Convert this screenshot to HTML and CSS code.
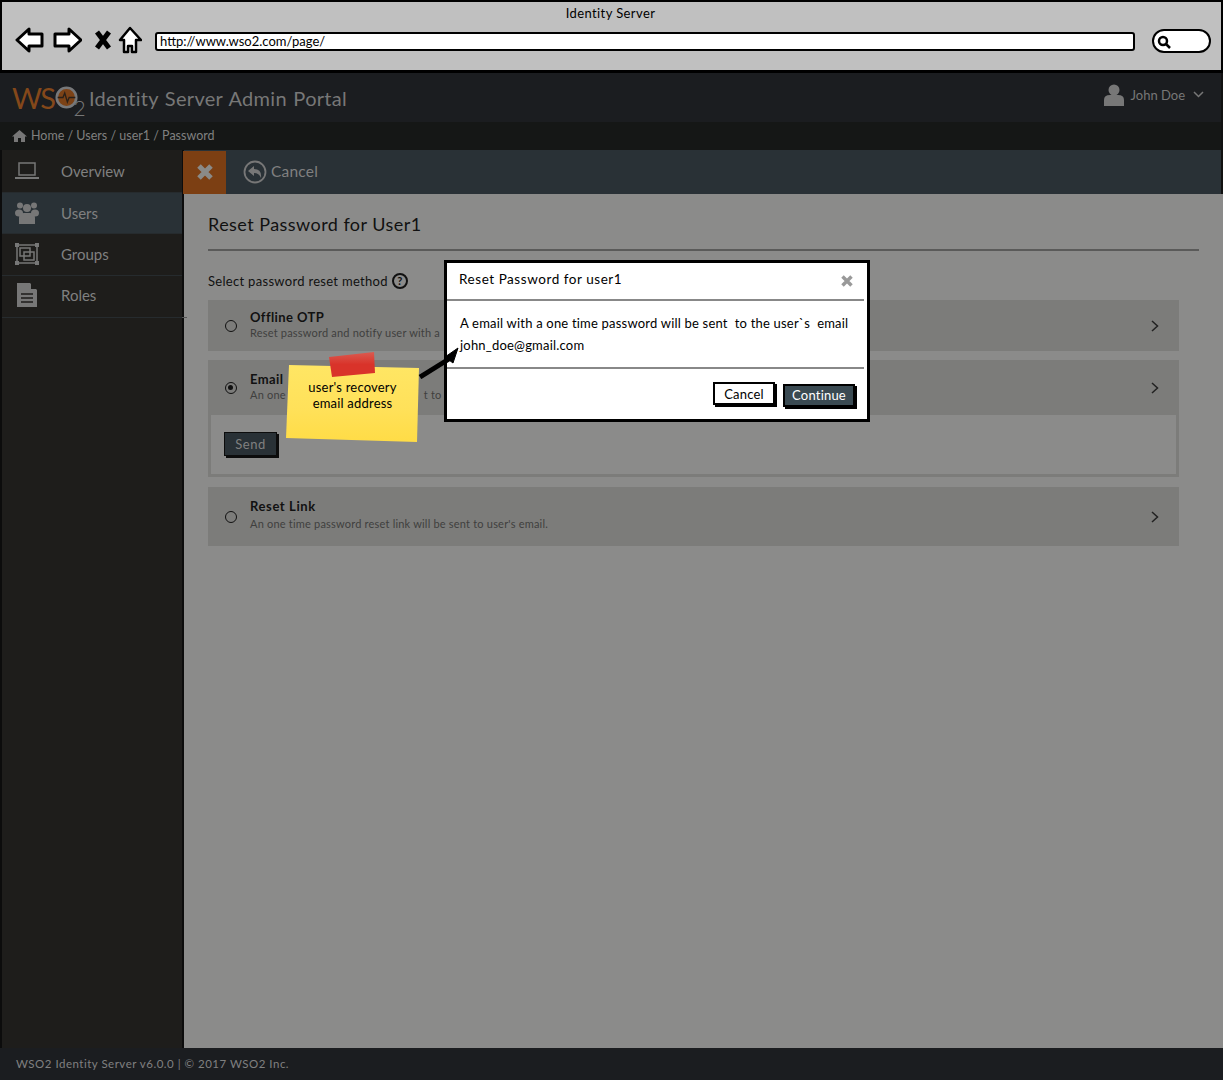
FILE: index.html
```html
<!DOCTYPE html>
<html lang="en">

<head>
  <meta charset="UTF-8">
  <meta name="viewport" content="width=device-width, initial-scale=1.0">
  <title>Identity Server</title>
  <link rel="stylesheet" href="styles.css">
</head>

<body>
  <div id="page">
    <!-- browser chrome -->
    <div id="browser">
      <div class="browser-title">Identity Server</div>
      <div class="browser-nav">
        <svg class="nav-icon" width="30" height="26" viewBox="0 0 30 26"><path d="M2 13 L14 2 L14 7 L27 7 L27 19 L14 19 L14 24 Z" fill="#fff" stroke="#000" stroke-width="3" stroke-linejoin="round"/></svg>
        <svg class="nav-icon" width="30" height="26" viewBox="0 0 30 26"><path d="M29 13 L17 2 L17 7 L3 7 L3 19 L17 19 L17 24 Z" fill="#fff" stroke="#000" stroke-width="3" stroke-linejoin="round"/></svg>
        <svg class="nav-icon nav-x" width="16" height="20" viewBox="0 0 16 20"><path d="M2 2 L14 18 M14 2 L2 18" stroke="#000" stroke-width="5"/></svg>
        <svg class="nav-icon" width="24" height="28" viewBox="0 0 24 28"><path d="M12 2 L23 14 L18 14 L18 26 L14 26 L14 20 L10 20 L10 26 L6 26 L6 14 L2 14 Z" fill="#fff" stroke="#000" stroke-width="2.5" stroke-linejoin="round"/></svg>
        <div class="url-box">http://www.wso2.com/page/</div>
        <div class="search-box">
          <svg width="14" height="14" viewBox="0 0 14 14"><circle cx="6" cy="6" r="4" fill="none" stroke="#000" stroke-width="2.5"/><path d="M9 9 L13 13" stroke="#000" stroke-width="2.5"/></svg>
        </div>
      </div>
    </div>

    <header id="header">
      <div class="logo">
        <span class="logo-ws">WS</span>
        <svg class="logo-o" width="23" height="23" viewBox="0 0 26 26"><circle cx="13" cy="13" r="11" fill="#7c4216" stroke="#77787a" stroke-width="3"/><path d="M3 13 L9 13 L11 8 L14 18 L16 13 L23 13" fill="none" stroke="#2a2018" stroke-width="1.500"/></svg>
        <span class="logo-two">2</span>
      </div>
      <div class="app-name">Identity Server Admin Portal</div>
      <div class="user">
        <svg width="20" height="22" viewBox="0 0 20 22"><circle cx="10" cy="6" r="5.500" fill="#777"/><path d="M0 22 L0 16 Q0 11 6 11 L14 11 Q20 11 20 16 L20 22 Z" fill="#777"/></svg>
        <span class="user-name">John Doe</span>
        <svg width="11" height="7" viewBox="0 0 11 7"><path d="M1 1 L5.500 5.500 L10 1" fill="none" stroke="#777" stroke-width="1.500"/></svg>
      </div>
    </header>

    <div id="crumbs">
      <svg width="15" height="12" viewBox="0 0 15 12"><path d="M7.500 0 L15 6.500 L13 6.500 L13 12 L9 12 L9 8 L6 8 L6 12 L2 12 L2 6.500 L0 6.500 Z" fill="#777"/></svg>
      <span>Home / Users / user1 / Password</span>
    </div>

    <div id="main">
      <ul id="side">
        <li class="side-item">
          <svg width="24" height="18" viewBox="0 0 24 18"><rect x="4" y="1" width="16" height="12" fill="none" stroke="#777" stroke-width="1.500"/><rect x="0" y="15" width="24" height="2" fill="#777"/></svg>
          <span>Overview</span>
        </li>
        <li class="side-item side-active">
          <svg width="24" height="22" viewBox="0 0 24 22"><circle cx="5" cy="3.500" r="3" fill="#777"/><circle cx="19" cy="3.500" r="3" fill="#777"/><circle cx="12" cy="6" r="4" fill="#777"/><ellipse cx="4" cy="11" rx="4" ry="3.500" fill="#777"/><ellipse cx="20" cy="11" rx="4" ry="3.500" fill="#777"/><path d="M4 22 L4 16 Q4 11 9 11 L15 11 Q20 11 20 16 L20 22 Z" fill="#777"/></svg>
          <span>Users</span>
        </li>
        <li class="side-item">
          <svg width="24" height="22" viewBox="0 0 24 22"><path d="M2 2 H22 V20 H2 Z" fill="none" stroke="#777" stroke-width="1.500"/><rect x="0" y="0" width="4" height="4" fill="#777"/><rect x="20" y="0" width="4" height="4" fill="#777"/><rect x="0" y="18" width="4" height="4" fill="#777"/><rect x="20" y="18" width="4" height="4" fill="#777"/><rect x="5" y="5" width="10" height="8" fill="none" stroke="#777" stroke-width="1.500"/><rect x="9" y="9" width="10" height="8" fill="none" stroke="#777" stroke-width="1.500"/></svg>
          <span>Groups</span>
        </li>
        <li class="side-item side-roles">
          <svg width="22" height="24" viewBox="0 0 22 24"><path d="M1 0 H14 L21 7 V24 H1 Z" fill="#777"/><path d="M15 0 L21 6 H15 Z" fill="#1e1d1b"/><path d="M5 11 H17 M5 15 H17 M5 19 H17" stroke="#1e1d1b" stroke-width="1.500"/></svg>
          <span>Roles</span>
        </li>
      </ul>

      <div id="right">
        <div id="toolbar">
          <div class="tool-close">
            <svg width="18" height="18" viewBox="0 0 18 18"><path d="M3 3 L15 15 M15 3 L3 15" stroke="#8a8a88" stroke-width="5"/></svg>
          </div>
          <div class="tool-cancel">
            <svg width="24" height="24" viewBox="0 0 24 24"><circle cx="12" cy="12" r="10.500" fill="none" stroke="#777" stroke-width="1.800"/><path d="M5 11 L11 6 L11 9 Q19 9 18 18 Q16 13 11 13 L11 16 Z" fill="#777"/></svg>
            <span>Cancel</span>
          </div>
        </div>

        <div id="content">
          <h1 class="page-title">Reset Password for User1</h1>
          <div class="method-label">
            <span>Select password reset method</span>
            <span class="help">?</span>
          </div>

          <div class="method">
            <span class="radio"></span>
            <div class="method-text">
              <div class="method-name">Offline OTP</div>
              <div class="method-desc">Reset password and notify user with a</div>
            </div>
            <svg class="chevron" width="8" height="12" viewBox="0 0 8 12"><path d="M1 1 L6.500 6 L1 11" fill="none" stroke="#222" stroke-width="1.500"/></svg>
          </div>

          <div class="method method-open">
            <span class="radio radio-on"></span>
            <div class="method-text">
              <div class="method-name">Email</div>
              <div class="method-desc">An one<span class="desc-rest">t to u</span></div>
            </div>
            <svg class="chevron" width="8" height="12" viewBox="0 0 8 12"><path d="M1 1 L6.500 6 L1 11" fill="none" stroke="#222" stroke-width="1.500"/></svg>
          </div>
          <div class="method-panel">
            <button class="send-btn">Send</button>
          </div>

          <div class="method method-last">
            <span class="radio"></span>
            <div class="method-text">
              <div class="method-name">Reset Link</div>
              <div class="method-desc">An one time password reset link will be sent to user's email.</div>
            </div>
            <svg class="chevron" width="8" height="12" viewBox="0 0 8 12"><path d="M1 1 L6.500 6 L1 11" fill="none" stroke="#222" stroke-width="1.500"/></svg>
          </div>
        </div>
      </div>
    </div>

    <footer id="footer">WSO2 Identity Server v6.0.0 | © 2017 WSO2 Inc.</footer>

    <!-- dialog and its note lie over the page -->
    <div id="dialog">
      <div class="dialog-head">
        <span>Reset Password for user1</span>
        <svg width="12" height="12" viewBox="0 0 12 12"><path d="M1.500 1.500 L10.500 10.500 M10.500 1.500 L1.500 10.500" stroke="#999" stroke-width="3.500"/></svg>
      </div>
      <div class="dialog-body">
        <p>A email with a one time password will be sent&nbsp; to the user`s&nbsp; email</p>
        <p>john_doe@gmail.com</p>
      </div>
      <div class="dialog-foot">
        <button class="btn-cancel">Cancel</button>
        <button class="btn-continue">Continue</button>
      </div>
    </div>

    <div id="note">user's recovery<br>email address</div>
    <div id="tape"></div>
    <svg id="arrow" width="44" height="34" viewBox="0 0 44 34"><path d="M2 32 L31 14" stroke="#000" stroke-width="5"/><path d="M40 3 L35 18 L27 12 Z" fill="#000" stroke="#000" stroke-width="1"/></svg>
  </div>
</body>

</html>
```

FILE: styles.css
```css
* {
  margin: 0;
  padding: 0;
  box-sizing: border-box;
}

li {
  list-style: none;
}

body {
  font-family: "Lato", "Noto Sans", sans-serif;
  background-color: #000;
}

#page {
  position: relative;
  width: 1223px;
  height: 1080px;
  display: flex;
  flex-direction: column;
  overflow: hidden;
}

/* browser chrome */
#browser {
  height: 73px;
  background-color: #c0c0c0;
  border: 2px solid #000;
  border-bottom-width: 3px;
  flex-shrink: 0;
}

.browser-title {
  text-align: center;
  font-size: 13px;
  line-height: 15px;
  margin: 4px 2px 0 0;
  letter-spacing: 0.4px;
}

.browser-nav {
  display: flex;
  align-items: center;
  padding-left: 13px;
  margin-top: 1px;
  height: 36px;
}

.nav-icon {
  margin-right: 7px;
  flex-shrink: 0;
}

.nav-x {
  margin-left: 6px;
}

.url-box {
  width: 980px;
  height: 19px;
  margin: 2px 0 0 6px;
  background-color: #fff;
  border: 2.500px solid #000;
  border-radius: 3px;
  font-size: 13px;
  line-height: 14px;
  padding-left: 3px;
}

.search-box {
  width: 59px;
  height: 24px;
  margin: 1px 0 0 17px;
  background-color: #fff;
  border: 2.500px solid #000;
  border-radius: 12px;
  padding: 2px 0 0 3px;
}

/* header */
#header {
  height: 49px;
  background-color: #1b1d20;
  border-right: 2px solid #111;
  display: flex;
  align-items: center;
  padding: 0 17px 0 12px;
  flex-shrink: 0;
}

.logo {
  display: flex;
  align-items: center;
  width: 77px;
  height: 34px;
  color: #84481a;
}

.logo-ws {
  font-size: 29px;
  letter-spacing: -1.500px;
}

.logo-o {
  margin-left: 0;
  flex-shrink: 0;
}

.logo-two {
  color: #777;
  font-size: 21px;
  font-weight: 300;
  align-self: flex-end;
  line-height: 20px;
  margin-left: -4px;
  margin-bottom: -3px;
}

.app-name {
  color: #777;
  font-size: 20px;
  letter-spacing: 0.300px;
  word-spacing: 1px;
  flex: 1;
}

.user {
  display: flex;
  align-items: center;
  color: #777;
  font-size: 13px;
  margin-top: -6px;
}

.user-name {
  margin: 0 8px 0 7px;
}

/* breadcrumb */
#crumbs {
  height: 28px;
  background-color: #151716;
  border-right: 2px solid #111;
  color: #808080;
  font-size: 12.500px;
  line-height: 26px;
  display: flex;
  align-items: center;
  gap: 4px;
  padding: 0 0 1px 12px;
  flex-shrink: 0;
}

#main {
  flex: 1;
  display: flex;
  min-height: 0;
}

/* sidebar */
#side {
  width: 184px;
  background-color: #1e1d1b;
  border-left: 2px solid #0c0c0c;
  border-right: 2px solid #0c0c0c;
  flex-shrink: 0;
}

.side-item {
  height: 42px;
  display: flex;
  align-items: center;
  padding: 0 0 2px 13px;
  color: #808080;
  font-size: 15px;
  border-bottom: 1px solid #262b2e;
  position: relative;
}

.side-item:first-child {
  height: 43px;
  padding-bottom: 1px;
}

.side-active {
  height: 41px;
  padding-bottom: 0;
  background-color: #293136;
}

.side-roles {
  padding-bottom: 4px;
}

.side-roles::after {
  content: "";
  position: absolute;
  left: 100%;
  bottom: -1px;
  width: 5px;
  height: 1px;
  background-color: #555;
}

.side-item svg {
  width: 24px;
  margin-right: 22px;
}

#right {
  flex: 1;
  display: flex;
  flex-direction: column;
  min-width: 0;
}

/* toolbar */
#toolbar {
  height: 44px;
  background-color: #293136;
  border-right: 2px solid #111;
  display: flex;
  align-items: center;
  flex-shrink: 0;
}

.tool-close {
  width: 43px;
  height: 43px;
  margin-left: -1px;
  background-color: #7c3f13;
  display: flex;
  align-items: center;
  justify-content: center;
}

.tool-cancel {
  display: flex;
  align-items: center;
  gap: 4px;
  margin: -1px 0 0 17px;
  color: #808080;
  font-size: 15.500px;
  letter-spacing: 0.2px;
}

.tool-cancel span {
  margin-top: -1px;
}

/* content */
#content {
  flex: 1;
  background-color: #8b8b8a;
  padding: 18px 24px 0;
  color: #111;
}

.page-title {
  font-size: 18px;
  font-weight: 400;
  line-height: 25px;
  letter-spacing: 0.450px;
  border-bottom: 2px solid #5a5a59;
  height: 39px;
}

.method-label {
  display: flex;
  align-items: center;
  gap: 4px;
  margin-top: 20px;
  font-size: 13px;
  letter-spacing: 0.300px;
  height: 20px;
}

.help {
  width: 16px;
  height: 16px;
  border: 2px solid #111;
  border-radius: 50%;
  font-size: 11px;
  font-weight: 700;
  line-height: 12px;
  text-align: center;
  letter-spacing: 0;
}

.method {
  height: 51px;
  margin: 9px 20px 0 0;
  background-color: #7c7c7a;
  display: flex;
  align-items: center;
  padding-left: 17px;
}

.method-open {
  height: 55px;
}

.method-last {
  height: 59px;
}

.radio {
  width: 12px;
  height: 12px;
  border: 1.500px solid #111;
  border-radius: 50%;
  flex-shrink: 0;
  position: relative;
}

.radio-on::after {
  content: "";
  position: absolute;
  left: 2px;
  top: 2px;
  width: 5px;
  height: 5px;
  background-color: #111;
  border-radius: 50%;
}

.method-text {
  flex: 1;
  margin: -2px 0 0 13px;
}

.method-name {
  font-size: 13px;
  font-weight: 700;
  letter-spacing: 0.400px;
  line-height: 16px;
}

.method-desc {
  font-size: 11px;
  color: #3f3f3e;
  letter-spacing: 0.2px;
  line-height: 16px;
}

.method-last .method-text {
  margin-top: -4px;
}

.method-last .method-name {
  letter-spacing: 0.600px;
  margin-bottom: 2px;
}

.desc-rest {
  margin-left: 138px;
}

.chevron {
  margin-right: 20px;
}

.method-panel {
  height: 62px;
  margin: 0 20px 10px 0;
  border: 3px solid #7c7c7a;
  border-top: 0;
  padding: 17px 0 0 13px;
}

.method-panel + .method {
  margin-top: 0;
}

.send-btn {
  display: block;
  width: 53px;
  height: 24px;
  background-color: #293136;
  border: 1px solid #0c0c0c;
  box-shadow: 2px 2px 0 #0c0c0c;
  color: #808080;
  font-family: inherit;
  font-size: 13px;
  letter-spacing: 0.5px;
}

/* footer */
#footer {
  height: 32px;
  background-color: #1b1d20;
  color: #808080;
  font-size: 11.500px;
  letter-spacing: 0.5px;
  padding: 9px 0 0 16px;
  flex-shrink: 0;
}

/* dialog */
#dialog {
  position: absolute;
  left: 444px;
  top: 260px;
  width: 426px;
  height: 162px;
  background-color: #fff;
  border: 3px solid #000;
  color: #000;
}

.dialog-head {
  height: 38px;
  margin: 0 3px 0 0;
  padding: 8px 14px 0 12px;
  display: flex;
  justify-content: space-between;
  font-size: 13.500px;
  letter-spacing: 0.550px;
  border-bottom: 2px solid #888;
}

.dialog-head svg {
  margin: 4px -3px 0 0;
}

.dialog-body {
  height: 68px;
  margin-right: 3px;
  padding: 11px 0 0 13px;
  border-bottom: 2px solid #888;
  font-size: 13px;
  line-height: 22px;
  letter-spacing: 0.200px;
}

.dialog-foot {
  display: flex;
  justify-content: flex-end;
  gap: 7px;
  padding: 14px 12px 0 0;
}

.btn-cancel,
.btn-continue {
  height: 23px;
  border: 2px solid #000;
  box-shadow: 2px 2px 0 #000;
  font-family: inherit;
  font-size: 13px;
  letter-spacing: 0.2px;
}

.btn-cancel {
  width: 62px;
  margin: -1px 1px 0 0;
  background-color: #fff;
  color: #000;
}

.btn-continue {
  width: 72px;
  margin-top: 1px;
  padding-bottom: 2px;
  background-color: #3a4a52;
  color: #fff;
}

/* sticky note */
#note {
  position: absolute;
  left: 286px;
  top: 365px;
  width: 133px;
  height: 77px;
  background: linear-gradient(#ffe664, #ffe15a 55%, #ffdc46);
  clip-path: polygon(3px 0, 133px 3px, 131px 77px, 0 73px);
  font-size: 13px;
  line-height: 16px;
  text-align: center;
  padding-top: 14px;
  letter-spacing: 0.2px;
  color: #000;
}

#tape {
  position: absolute;
  left: 329px;
  top: 352px;
  width: 46px;
  height: 25px;
  background: linear-gradient(#db5b50, #d9332a 50%);
  clip-path: polygon(0 5px, 45px 0, 46px 21px, 3px 25px);
}

#arrow {
  position: absolute;
  left: 418px;
  top: 345px;
}
```
